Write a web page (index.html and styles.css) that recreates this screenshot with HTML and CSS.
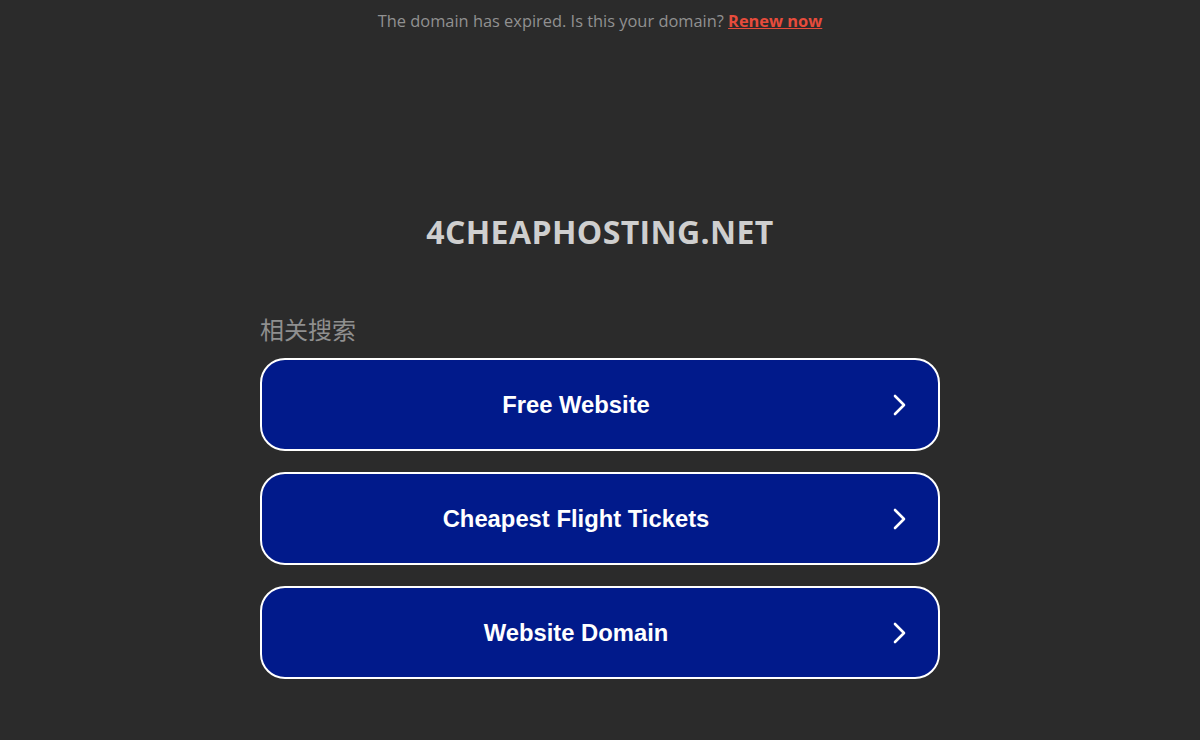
FILE: index.html
```html
<!DOCTYPE html>
<html lang="en">
<head>
<meta charset="utf-8">
<title>4cheaphosting.net</title>
<link rel="stylesheet" href="styles.css">
</head>
<body>
<div class="notice">The domain has expired. Is this your domain? <a class="renew" href="#">Renew now</a></div>
<main class="main">
  <h1 class="domain">4CHEAPHOSTING.NET</h1>
  <section class="related">
    <h2 class="related-title">相关搜索</h2>
    <ul class="links">
      <li><a class="link" href="#"><span class="link-text">Free Website</span><svg class="chev" viewBox="0 0 13 22" width="13" height="22"><path d="M2 2 L11 11 L2 20" fill="none" stroke="#fff" stroke-width="2.6" stroke-linecap="round" stroke-linejoin="round"/></svg></a></li>
      <li><a class="link" href="#"><span class="link-text">Cheapest Flight Tickets</span><svg class="chev" viewBox="0 0 13 22" width="13" height="22"><path d="M2 2 L11 11 L2 20" fill="none" stroke="#fff" stroke-width="2.6" stroke-linecap="round" stroke-linejoin="round"/></svg></a></li>
      <li><a class="link" href="#"><span class="link-text">Website Domain</span><svg class="chev" viewBox="0 0 13 22" width="13" height="22"><path d="M2 2 L11 11 L2 20" fill="none" stroke="#fff" stroke-width="2.6" stroke-linecap="round" stroke-linejoin="round"/></svg></a></li>
    </ul>
  </section>
</main>
</body>
</html>
```
FILE: styles.css
```css
html, body {
  margin: 0;
  padding: 0;
  background: #2b2b2b;
  height: 100%;
}
body {
  font-family: "Open Sans", "Noto Sans", sans-serif;
}
.notice {
  text-align: center;
  color: #919191;
  font-size: 16.4px;
  line-height: 20px;
  padding-top: 11px;
}
.renew {
  color: #e74c3c;
  font-weight: 700;
  text-decoration: underline;
}
.main {
  width: 680px;
  margin: 0 auto;
}
.domain {
  margin: 181px 0 0;
  text-align: center;
  font-family: "Open Sans", sans-serif;
  font-weight: 700;
  font-size: 32px;
  line-height: 40px;
  color: #cfcfcf;
  letter-spacing: 0.4px;
}
.related {
  margin-top: 61px;
}
.related-title {
  margin: 0 0 13px;
  font-family: "Noto Sans CJK SC", sans-serif;
  font-weight: 400;
  font-size: 24px;
  line-height: 32px;
  color: #8f8f8f;
}
.links {
  list-style: none;
  margin: 0;
  padding: 0;
  display: flex;
  flex-direction: column;
  gap: 21px;
}
.link {
  display: flex;
  align-items: center;
  height: 89px;
  box-sizing: content-box;
  background: #011a8b;
  border: 2px solid #ffffff;
  border-radius: 25px;
  text-decoration: none;
}
.link-text {
  flex: 1;
  text-align: center;
  font-family: "Liberation Sans", Arial, sans-serif;
  font-weight: 700;
  font-size: 23.8px;
  color: #ffffff;
}
.chev {
  display: block;
  margin: 0 32px 0 3px;
}
```
